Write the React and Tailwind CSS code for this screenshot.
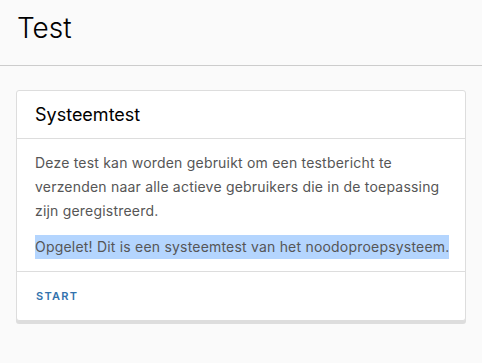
import React from "react";

const App = () => {
  return (
    <div className="min-h-screen bg-[#fafafa] font-['Inter',sans-serif]">
      <div className="h-[66px] border-b border-[#cccccc] px-[17px] pt-[14px]">
        <h1 className="text-[28px] font-light text-[#000000] leading-none">Test</h1>
      </div>

      <div className="mx-[16px] mt-[24px] bg-white border border-[#dddddd] rounded-[3px] shadow-[0_3px_0_0_#dddddd]">
        <div className="h-[48px] px-[18px] flex items-center border-b border-[#dddddd]">
          <h3 className="text-[18px] text-[#000000]">Systeemtest</h3>
        </div>

        <div className="px-[18px] py-[12px] text-[14px] leading-[24px] tracking-[0.2px] text-[#565656]">
          <p>
            Deze test kan worden gebruikt om een testbericht te verzenden naar
            alle actieve gebruikers die in de toepassing zijn geregistreerd.
          </p>
          <p className="mt-[12px] whitespace-nowrap">
            <span className="inline-block bg-[#b4d5fe]">
              Opgelet! Dit is een systeemtest van het noodoproepsysteem.
            </span>
          </p>
        </div>

        <div className="h-[49px] px-[19px] flex items-center border-t border-[#dddddd]">
          <button className="text-[11px] font-semibold tracking-[1.3px] text-[#3272ad] uppercase">
            Start
          </button>
        </div>
      </div>
    </div>
  );
};

export default App;
